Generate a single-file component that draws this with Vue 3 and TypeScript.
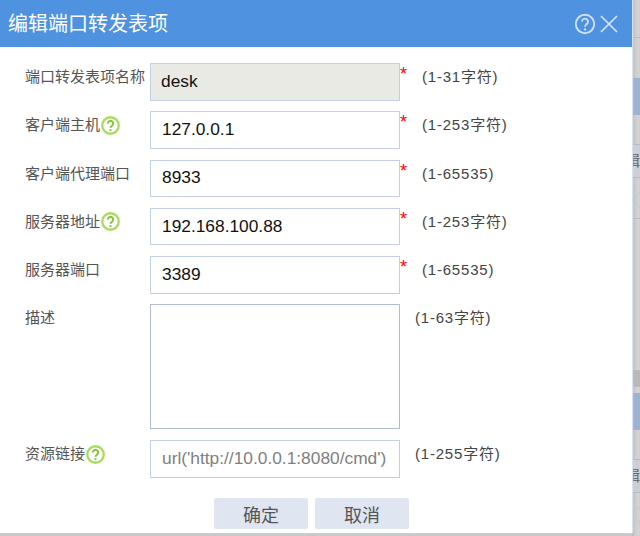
<script setup lang="ts">
interface Row {
  label: string
  value: string
  hint: string
  help?: boolean
  disabled?: boolean
}
const rows: Row[] = [
  { label: '端口转发表项名称', value: 'desk', hint: '(1-31字符)', disabled: true },
  { label: '客户端主机', value: '127.0.0.1', hint: '(1-253字符)', help: true },
  { label: '客户端代理端口', value: '8933', hint: '(1-65535)' },
  { label: '服务器地址', value: '192.168.100.88', hint: '(1-253字符)', help: true },
  { label: '服务器端口', value: '3389', hint: '(1-65535)' },
]
</script>

<template>
  <div class="page">
    <div class="dialog">
      <header class="head">
        <h1 class="title">编辑端口转发表项</h1>
        <div class="tools">
          <svg width="22" height="22" viewBox="0 0 22 22">
            <circle cx="11" cy="11" r="9.2" fill="none" stroke="#cfe0f6" stroke-width="1.9" />
            <path d="M8 8.6a3 3 0 1 1 4.7 2.5c-1.1.8-1.7 1.3-1.7 2.7" fill="none" stroke="#cfe0f6" stroke-width="1.9" />
            <circle cx="11" cy="16.4" r="1.2" fill="#cfe0f6" />
          </svg>
          <svg width="18" height="18" viewBox="0 0 18 18">
            <path d="M1 1l16 16M17 1L1 17" fill="none" stroke="#dce8f8" stroke-width="1.6" />
          </svg>
        </div>
      </header>
      <form class="form" @submit.prevent>
        <div v-for="row in rows" :key="row.label" class="row">
          <div class="label">
            <span>{{ row.label }}</span>
            <svg v-if="row.help" class="help" width="19" height="19" viewBox="0 0 18 18">
              <circle cx="9" cy="9" r="7.8" fill="none" stroke="#a8dc5c" stroke-width="2.2" />
              <path d="M6.5 7.2a2.5 2.5 0 1 1 3.9 2c-.9.6-1.4 1-1.4 2" fill="none" stroke="#86c23a" stroke-width="1.9" />
              <circle cx="9" cy="13.3" r="1.1" fill="#86c23a" />
            </svg>
          </div>
          <input class="field" :class="{ off: row.disabled }" :value="row.value" :readonly="row.disabled" />
          <span class="star">*</span>
          <span class="hint">{{ row.hint }}</span>
        </div>
        <div class="row tall">
          <div class="label">描述</div>
          <textarea class="field area"></textarea>
          <span class="hint near">(1-63字符)</span>
        </div>
        <div class="row">
          <div class="label">
            <span>资源链接</span>
            <svg class="help" width="19" height="19" viewBox="0 0 18 18">
              <circle cx="9" cy="9" r="7.8" fill="none" stroke="#a8dc5c" stroke-width="2.2" />
              <path d="M6.5 7.2a2.5 2.5 0 1 1 3.9 2c-.9.6-1.4 1-1.4 2" fill="none" stroke="#86c23a" stroke-width="1.9" />
              <circle cx="9" cy="13.3" r="1.1" fill="#86c23a" />
            </svg>
          </div>
          <input class="field" placeholder="url('http://10.0.0.1:8080/cmd')" />
          <span class="hint near">(1-255字符)</span>
        </div>
        <div class="actions">
          <button type="button" class="btn">确定</button>
          <button type="button" class="btn">取消</button>
        </div>
      </form>
    </div>
    <div class="backdrop">
      <div class="line l0"></div>
      <div class="band one"></div>
      <div class="line l1"></div>
      <div class="cell">辑</div>
      <div class="line"></div>
      <div class="ring"></div>
      <div class="line"></div>
      <div class="dark"></div>
      <div class="band two"></div>
      <div class="line l1"></div>
      <div class="cell">辑</div>
      <div class="line"></div>
      <div class="ring"></div>
    </div>
  </div>
</template>

<style scoped>
.page {
  width: 640px;
  height: 536px;
  display: flex;
  overflow: hidden;
  background: #c9c9c9;
  font-family: "Liberation Sans", "Noto Sans CJK SC", sans-serif;
}
.dialog {
  width: 632px;
  height: 533px;
  flex: none;
  background: #fff;
  box-shadow: 1px 0 1px #d6e2f4;
  position: relative;
  z-index: 1;
}
.head {
  height: 47px;
  background: #4f92e0;
  display: flex;
  align-items: center;
  justify-content: space-between;
  padding: 0 14px 0 8px;
}
.title {
  margin: -3px 0 0;
  font-size: 20px;
  font-weight: 400;
  color: #fff;
}
.tools {
  display: flex;
  align-items: center;
  gap: 4px;
  margin-top: 1px;
}
.tools svg {
  display: block;
}
.form {
  padding: 16px 0 0;
}
.row {
  height: 37.5px;
  margin-bottom: 10.75px;
  display: flex;
  align-items: flex-start;
  color: #444;
}
.row.tall {
  height: 125px;
  margin-bottom: 11px;
}
.label {
  width: 150px;
  flex: none;
  padding: 4px 0 0 25px;
  box-sizing: border-box;
  font-size: 15px;
  line-height: 20px;
  color: #555;
  display: flex;
  align-items: center;
  white-space: nowrap;
}
.help {
  flex: none;
  margin-left: 1px;
}
.field {
  width: 250px;
  height: 37.5px;
  flex: none;
  box-sizing: border-box;
  border: 1px solid #c3d0e4;
  background: #fff;
  padding: 0 10px 1px 11px;
  font: 17.33px "Liberation Sans", "Noto Sans CJK SC", sans-serif;
  color: #111;
  outline: none;
  border-radius: 0;
}
.field::placeholder {
  color: #808080;
  opacity: 1;
}
.field.off {
  background: #eaeae4;
  padding-left: 10px;
}
.area {
  height: 125px;
  resize: none;
  border-color: #b4bccf;
}
.star {
  width: 22px;
  flex: none;
  color: #f00;
  font-size: 18px;
  line-height: 20px;
  margin-top: 1px;
  box-sizing: border-box;
}
.hint {
  font-size: 15px;
  line-height: 20px;
  margin-top: 4px;
  color: #444;
  white-space: nowrap;
  letter-spacing: 0.8px;
}
.hint.near {
  margin-left: 15px;
}
.actions {
  display: flex;
  gap: 7px;
  padding: 9.5px 0 0 214px;
}
.btn {
  width: 94px;
  height: 31px;
  border: 0;
  border-radius: 2px;
  background: #dfe5f1;
  color: #555;
  font: 18px "Liberation Sans", "Noto Sans CJK SC", sans-serif;
  padding: 0;
}
.backdrop {
  flex: 1;
  min-width: 0;
  height: 536px;
  background: linear-gradient(90deg, #bdbdbd, #d2d2d2 60%);
  display: flex;
  flex-direction: column;
  overflow: hidden;
}
.band {
  height: 37px;
  flex: none;
  background: #9db3cf;
}
.band.one {
  margin-top: 40px;
}
.band.two {
  margin-top: 6px;
}
.line {
  height: 1px;
  flex: none;
  background: #b8bcc6;
}
.l0 {
  margin-top: 37px;
}
.l1 {
  margin-top: 29px;
}
.ring {
  width: 20px;
  height: 20px;
  flex: none;
  margin: 12px 0 8px 3px;
  box-sizing: border-box;
  border: 1px solid #c6cace;
  border-radius: 50%;
}
.dark {
  height: 17px;
  flex: none;
  margin-top: 151px;
  background: #b9b9b9;
}
.cell {
  font-size: 15px;
  line-height: 32px;
  height: 32px;
  flex: none;
  color: #666;
  white-space: nowrap;
  margin-left: -7px;
  background: #ccd0d5;
}
</style>
